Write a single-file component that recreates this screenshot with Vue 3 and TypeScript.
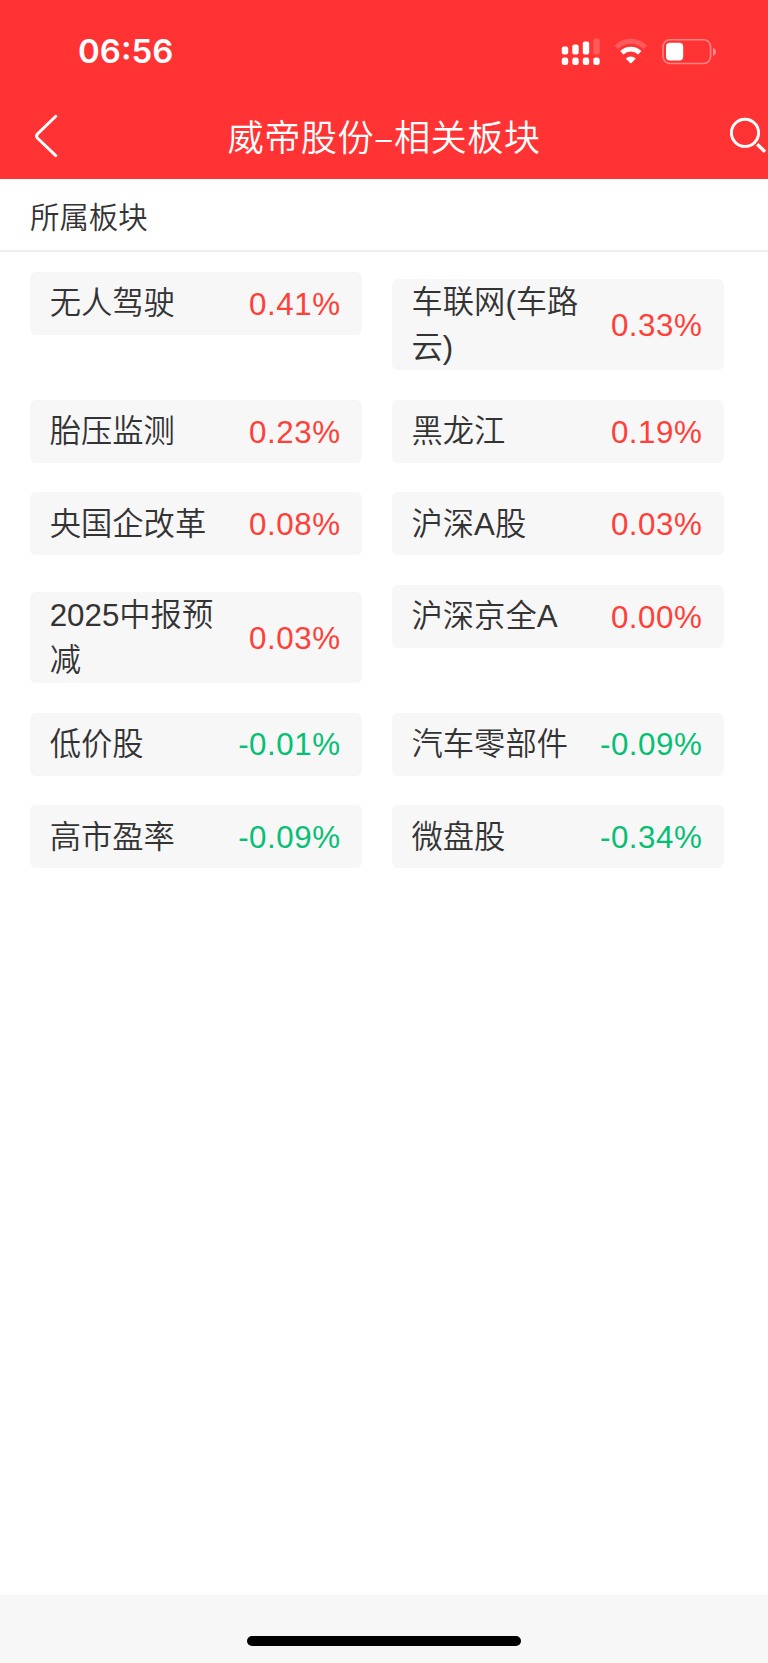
<script setup lang="ts">
interface Sector {
  name: string
  change: string
  tall?: boolean
}

const sectors: Sector[] = [
  { name: '无人驾驶', change: '0.41%' },
  { name: '车联网(车路云)', change: '0.33%', tall: true },
  { name: '胎压监测', change: '0.23%' },
  { name: '黑龙江', change: '0.19%' },
  { name: '央国企改革', change: '0.08%' },
  { name: '沪深A股', change: '0.03%' },
  { name: '2025中报预减', change: '0.03%', tall: true },
  { name: '沪深京全A', change: '0.00%' },
  { name: '低价股', change: '-0.01%' },
  { name: '汽车零部件', change: '-0.09%' },
  { name: '高市盈率', change: '-0.09%' },
  { name: '微盘股', change: '-0.34%' },
]
</script>

<template>
  <div class="screen">
    <header class="header">
      <div class="status">
        <span class="time">06:56</span>
        <svg class="status-icons" width="156" height="30" viewBox="0 0 156 30">
          <g fill="#fff">
            <rect x="1.8" y="9.6" width="6.4" height="8" rx="2" />
            <rect x="12.3" y="7.6" width="6.4" height="10" rx="2" />
            <rect x="22.8" y="4.6" width="6.4" height="13" rx="2" />
            <rect x="33.3" y="1.4" width="6.4" height="16.2" rx="2" opacity=".2" />
            <rect x="1.8" y="20.6" width="6.4" height="7.5" rx="2.4" />
            <rect x="12.3" y="20.6" width="6.4" height="7.5" rx="2.4" />
            <rect x="22.8" y="20.6" width="6.4" height="7.5" rx="2.4" />
            <rect x="33.3" y="20.6" width="6.4" height="7.5" rx="2.4" />
          </g>
          <g fill="none" stroke="#fff">
            <path d="M56.3 10.2a20.8 20.8 0 0 1 29 0" stroke-width="5" opacity=".2" />
            <path d="M61.8 15.8a13 13 0 0 1 18 0" stroke-width="4.8" />
          </g>
          <path d="M65.8 21.4a7.2 7.2 0 0 1 10 0l-4.3 4.5q-.7.7-1.4 0z" fill="#fff" />
          <rect x="103" y="2.7" width="47.6" height="23.8" rx="7" fill="none" stroke="#fff" stroke-width="1.6" opacity=".4" />
          <rect x="106" y="5.7" width="17.2" height="17.8" rx="4" fill="#fff" />
          <path d="M153 10.7q2.8 1 2.8 4t-2.8 4z" fill="#fff" opacity=".45" />
        </svg>
      </div>
      <div class="nav">
        <svg class="back" width="30" height="50" viewBox="0 0 30 50">
          <path d="M24.8 5.2 6.6 22.9q-2.2 2.2 0 4.4L24.8 44.6" fill="none" stroke="#fff" stroke-width="2.9" stroke-linecap="round" />
        </svg>
        <h1 class="title">威帝股份–相关板块</h1>
        <svg class="search" width="40" height="40" viewBox="0 0 40 40">
          <circle cx="17" cy="16.8" r="13.6" fill="none" stroke="#fff" stroke-width="2.9" />
          <path d="M29.2 28.2 37 35.7" stroke="#fff" stroke-width="3.4" />
        </svg>
      </div>
    </header>

    <h2 class="section">所属板块</h2>

    <main class="grid">
      <div v-for="s in sectors" :key="s.name" class="card" :class="{ tall: s.tall }">
        <span class="name">{{ s.name }}</span>
        <span class="change" :class="{ down: s.change.startsWith('-') }">{{ s.change }}</span>
      </div>
    </main>

    <footer class="footer"><div class="home-bar"></div></footer>
  </div>
</template>

<style>
body {
  margin: 0;
  background: #fff;
}
</style>

<style scoped>
.screen {
  display: flex;
  flex-direction: column;
  width: 768px;
  height: 1663px;
  overflow: hidden;
  background: #fff;
  color: #333;
  font-family: "Liberation Sans", "Noto Sans CJK SC", sans-serif;
}
.header {
  flex: none;
  box-sizing: border-box;
  height: 179.3px;
  background: #ff3333;
  color: #fff;
}
.status {
  display: flex;
  justify-content: space-between;
  align-items: center;
  height: 103px;
  padding: 0 52px 0 78px;
  box-sizing: border-box;
}
.time {
  margin-bottom: 2px;
  font: 600 33px/40px Inter, sans-serif;
}
.status-icons {
  flex: none;
}
.nav {
  display: grid;
  grid-template-columns: 60px 1fr 60px;
  align-items: center;
  height: 66px;
}
.back {
  margin-left: 31px;
}
.title {
  margin: 0;
  padding-bottom: 2px;
  text-align: center;
  font-family: "Noto Sans CJK SC", sans-serif;
  font-size: 36.2px;
  line-height: 50px;
  font-weight: 350;
  letter-spacing: 0.45px;
}
.search {
  margin-left: 20px;
}
.section {
  flex: none;
  box-sizing: border-box;
  height: 72.5px;
  margin: 0;
  padding-left: 30px;
  border-bottom: 2px solid #eee;
  font-size: 29.4px;
  line-height: 78px;
  font-weight: 350;
}
.grid {
  flex: 1;
  display: grid;
  grid-template-columns: 332.3px 332.3px;
  column-gap: 29.5px;
  row-gap: 29.5px;
  align-content: start;
  align-items: start;
  padding: 19.9px 30px 0;
}
.card {
  display: flex;
  align-items: center;
  justify-content: space-between;
  box-sizing: border-box;
  min-height: 63px;
  padding: 0 21.7px 0 19.7px;
  border-radius: 6px;
  background: #f7f7f7;
  font-size: 31.3px;
  line-height: 45.35px;
}
.tall {
  margin-top: 7.8px;
}
.name {
  max-width: 178px;
  margin: 0.6px 0 -0.6px;
  font-weight: 350;
}
.change {
  margin: 1px 0 -1px;
  color: #ff4038;
  letter-spacing: 0.55px;
}
.down {
  color: #07c075;
}
.footer {
  flex: none;
  display: flex;
  justify-content: center;
  box-sizing: border-box;
  height: 68.3px;
  padding-top: 41.5px;
  background: #f7f7f7;
}
.home-bar {
  width: 274px;
  height: 10px;
  border-radius: 5px;
  background: #000;
}
</style>
